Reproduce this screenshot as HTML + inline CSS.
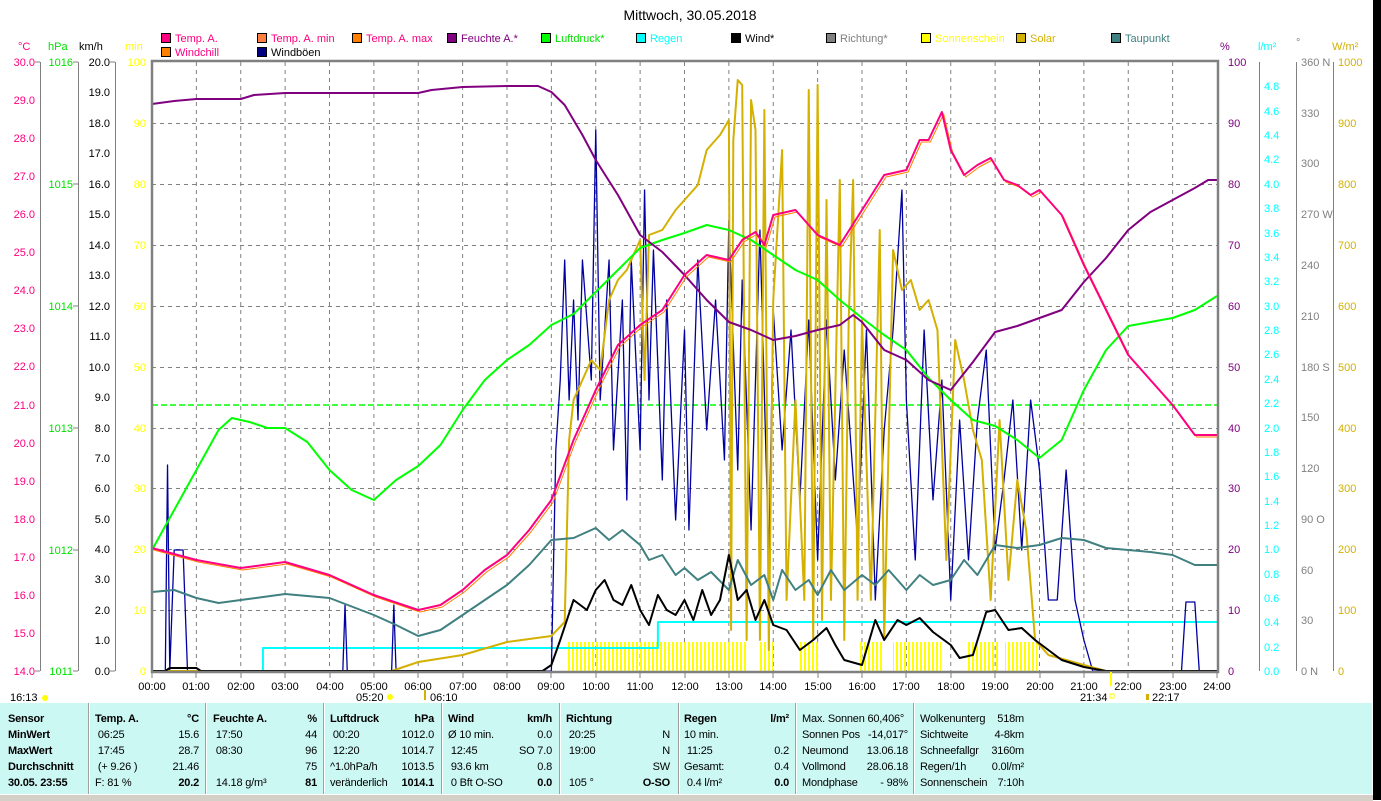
<!DOCTYPE html>
<html><head><meta charset="utf-8">
<style>
html,body{margin:0;padding:0;background:#fff;width:1381px;height:800px;overflow:hidden;font-family:"Liberation Sans",sans-serif;}
svg text{font-family:"Liberation Sans",sans-serif;font-size:11px;}
#tbl{position:absolute;left:0;top:703px;width:1372px;height:91px;background:#ccf8f4;}
#strip{position:absolute;left:1373px;top:0;width:8px;height:800px;background:#000;}
#bot{position:absolute;left:0;top:794px;width:1373px;height:6px;background:#d4d0c8;border-top:1px solid #fff;}
.c{position:absolute;top:8px;font-size:11px;letter-spacing:-0.2px;line-height:16px;color:#000;}
.c div{height:16px;position:relative;white-space:nowrap;}
.r{position:absolute;right:0;top:0;}
.b{font-weight:bold;}
.sep{position:absolute;top:0;width:1px;height:91px;background:#a0a0a0;border-right:1px solid #fff;}
</style></head><body>
<svg width="1381" height="703" style="position:absolute;left:0;top:0">
<defs>
<pattern id="sun" patternUnits="userSpaceOnUse" width="4" height="10"><rect x="0" y="0" width="2" height="10" fill="#ffff00"/></pattern>
</defs>
<text x="690" y="20" text-anchor="middle" style="font-size:14px">Mittwoch, 30.05.2018</text>
<g stroke="#000" stroke-width="1">
<rect x="161.5" y="33.5" width="9" height="9" fill="#ff0080"/>
<rect x="257.5" y="33.5" width="9" height="9" fill="#ff8040"/>
<rect x="352.5" y="33.5" width="9" height="9" fill="#ff8000"/>
<rect x="447.5" y="33.5" width="9" height="9" fill="#800080"/>
<rect x="541.5" y="33.5" width="9" height="9" fill="#00ff00"/>
<rect x="636.5" y="33.5" width="9" height="9" fill="#00ffff"/>
<rect x="731.5" y="33.5" width="9" height="9" fill="#000"/>
<rect x="826.5" y="33.5" width="9" height="9" fill="#808080"/>
<rect x="921.5" y="33.5" width="9" height="9" fill="#ffff00"/>
<rect x="1016.5" y="33.5" width="9" height="9" fill="#d4b000"/>
<rect x="1111.5" y="33.5" width="9" height="9" fill="#408080"/>
<rect x="161.5" y="47.5" width="9" height="9" fill="#ff8000"/>
<rect x="257.5" y="47.5" width="9" height="9" fill="#000080"/>
</g>
<g>
<text x="175" y="42" fill="#ff0080">Temp. A.</text>
<text x="271" y="42" fill="#ff0080">Temp. A. min</text>
<text x="366" y="42" fill="#ff0080">Temp. A. max</text>
<text x="461" y="42" fill="#800080">Feuchte A.*</text>
<text x="555" y="42" fill="#00e000">Luftdruck*</text>
<text x="650" y="42" fill="#00ffff">Regen</text>
<text x="745" y="42" fill="#000">Wind*</text>
<text x="840" y="42" fill="#808080">Richtung*</text>
<text x="935" y="42" fill="#ffff00">Sonnenschein</text>
<text x="1030" y="42" fill="#d4b000">Solar</text>
<text x="1125" y="42" fill="#408080">Taupunkt</text>
<text x="175" y="56" fill="#ff0080">Windchill</text>
<text x="271" y="56" fill="#000">Windböen</text>
</g>
<text x="18" y="50" fill="#ff0080">°C</text>
<text x="48" y="50" fill="#00e000">hPa</text>
<text x="79" y="50" fill="#000">km/h</text>
<text x="125" y="50" fill="#ffff00">min</text>
<text x="1220" y="50" fill="#800080">%</text>
<text x="1258" y="50" fill="#00ffff">l/m²</text>
<text x="1296" y="46" fill="#808080">°</text>
<text x="1332" y="50" fill="#d4b000">W/m²</text>
<g stroke="#808080" stroke-width="1">
<line x1="40.5" y1="62" x2="40.5" y2="671"/>
<line x1="78.5" y1="62" x2="78.5" y2="671"/>
<line x1="115.5" y1="62" x2="115.5" y2="671"/>
<line x1="1259.5" y1="62" x2="1259.5" y2="671"/>
<line x1="1296.5" y1="62" x2="1296.5" y2="671"/>
<line x1="1333.5" y1="62" x2="1333.5" y2="671"/>
<line x1="35" y1="62" x2="40" y2="62"/><line x1="35" y1="671" x2="40" y2="671"/>
<line x1="73" y1="62" x2="78" y2="62"/><line x1="73" y1="184" x2="78" y2="184"/><line x1="73" y1="306" x2="78" y2="306"/><line x1="73" y1="428" x2="78" y2="428"/><line x1="73" y1="550" x2="78" y2="550"/><line x1="73" y1="671" x2="78" y2="671"/>
<line x1="110" y1="62" x2="115" y2="62"/><line x1="110" y1="671" x2="115" y2="671"/>
</g>
<g fill="#ff0080" text-anchor="end">
<text x="35" y="66">30.0</text><text x="35" y="104">29.0</text><text x="35" y="142">28.0</text><text x="35" y="180">27.0</text><text x="35" y="218">26.0</text><text x="35" y="256">25.0</text><text x="35" y="294">24.0</text><text x="35" y="332">23.0</text><text x="35" y="370">22.0</text><text x="35" y="409">21.0</text><text x="35" y="447">20.0</text><text x="35" y="485">19.0</text><text x="35" y="523">18.0</text><text x="35" y="561">17.0</text><text x="35" y="599">16.0</text><text x="35" y="637">15.0</text><text x="35" y="675">14.0</text>
</g>
<g fill="#00e000" text-anchor="end">
<text x="73" y="66">1016</text><text x="73" y="188">1015</text><text x="73" y="310">1014</text><text x="73" y="432">1013</text><text x="73" y="554">1012</text><text x="73" y="675">1011</text>
</g>
<g fill="#000" text-anchor="end">
<text x="110" y="66">20.0</text><text x="110" y="96">19.0</text><text x="110" y="127">18.0</text><text x="110" y="157">17.0</text><text x="110" y="188">16.0</text><text x="110" y="218">15.0</text><text x="110" y="249">14.0</text><text x="110" y="279">13.0</text><text x="110" y="310">12.0</text><text x="110" y="340">11.0</text><text x="110" y="371">10.0</text><text x="110" y="401">9.0</text><text x="110" y="432">8.0</text><text x="110" y="462">7.0</text><text x="110" y="492">6.0</text><text x="110" y="523">5.0</text><text x="110" y="553">4.0</text><text x="110" y="583">3.0</text><text x="110" y="614">2.0</text><text x="110" y="644">1.0</text><text x="110" y="675">0.0</text>
</g>
<g fill="#ffff00" text-anchor="end">
<text x="146" y="66">100</text><text x="146" y="127">90</text><text x="146" y="188">80</text><text x="146" y="249">70</text><text x="146" y="310">60</text><text x="146" y="371">50</text><text x="146" y="432">40</text><text x="146" y="492">30</text><text x="146" y="553">20</text><text x="146" y="614">10</text><text x="146" y="675">0</text>
</g>
<g fill="#800080">
<text x="1228" y="66">100</text><text x="1228" y="127">90</text><text x="1228" y="188">80</text><text x="1228" y="249">70</text><text x="1228" y="310">60</text><text x="1228" y="371">50</text><text x="1228" y="432">40</text><text x="1228" y="492">30</text><text x="1228" y="553">20</text><text x="1228" y="614">10</text><text x="1228" y="675">0</text>
</g>
<g fill="#00ffff">
<text x="1264" y="90">4.8</text><text x="1264" y="115">4.6</text><text x="1264" y="139">4.4</text><text x="1264" y="163">4.2</text><text x="1264" y="188">4.0</text><text x="1264" y="212">3.8</text><text x="1264" y="237">3.6</text><text x="1264" y="261">3.4</text><text x="1264" y="285">3.2</text><text x="1264" y="310">3.0</text><text x="1264" y="334">2.8</text><text x="1264" y="358">2.6</text><text x="1264" y="383">2.4</text><text x="1264" y="407">2.2</text><text x="1264" y="432">2.0</text><text x="1264" y="456">1.8</text><text x="1264" y="480">1.6</text><text x="1264" y="505">1.4</text><text x="1264" y="529">1.2</text><text x="1264" y="553">1.0</text><text x="1264" y="578">0.8</text><text x="1264" y="602">0.6</text><text x="1264" y="626">0.4</text><text x="1264" y="651">0.2</text><text x="1264" y="675">0.0</text>
</g>
<g fill="#808080">
<text x="1301" y="66">360 N</text><text x="1301" y="117">330</text><text x="1301" y="167">300</text><text x="1301" y="218">270 W</text><text x="1301" y="269">240</text><text x="1301" y="320">210</text><text x="1301" y="371">180 S</text><text x="1301" y="421">150</text><text x="1301" y="472">120</text><text x="1301" y="523">90 O</text><text x="1301" y="574">60</text><text x="1301" y="624">30</text><text x="1301" y="675">0 N</text>
</g>
<g fill="#d4b000">
<text x="1338" y="66">1000</text><text x="1338" y="127">900</text><text x="1338" y="188">800</text><text x="1338" y="249">700</text><text x="1338" y="310">600</text><text x="1338" y="371">500</text><text x="1338" y="432">400</text><text x="1338" y="492">300</text><text x="1338" y="553">200</text><text x="1338" y="614">100</text><text x="1338" y="675">0</text>
</g>
<g stroke="#808080" stroke-width="1" stroke-dasharray="4,4">
<line x1="152" y1="123.5" x2="1217" y2="123.5"/><line x1="152" y1="184.5" x2="1217" y2="184.5"/><line x1="152" y1="245.5" x2="1217" y2="245.5"/><line x1="152" y1="306.5" x2="1217" y2="306.5"/><line x1="152" y1="367.5" x2="1217" y2="367.5"/><line x1="152" y1="428.5" x2="1217" y2="428.5"/><line x1="152" y1="488.5" x2="1217" y2="488.5"/><line x1="152" y1="549.5" x2="1217" y2="549.5"/><line x1="152" y1="610.5" x2="1217" y2="610.5"/>
</g>
<g transform="translate(152,0) scale(44.375,1)" fill="none">
<g stroke="#808080" stroke-dasharray="4,4">
<line x1="1" y1="62" x2="1" y2="671" vector-effect="non-scaling-stroke"/><line x1="2" y1="62" x2="2" y2="671" vector-effect="non-scaling-stroke"/><line x1="3" y1="62" x2="3" y2="671" vector-effect="non-scaling-stroke"/><line x1="4" y1="62" x2="4" y2="671" vector-effect="non-scaling-stroke"/><line x1="5" y1="62" x2="5" y2="671" vector-effect="non-scaling-stroke"/><line x1="6" y1="62" x2="6" y2="671" vector-effect="non-scaling-stroke"/><line x1="7" y1="62" x2="7" y2="671" vector-effect="non-scaling-stroke"/><line x1="8" y1="62" x2="8" y2="671" vector-effect="non-scaling-stroke"/><line x1="9" y1="62" x2="9" y2="671" vector-effect="non-scaling-stroke"/><line x1="10" y1="62" x2="10" y2="671" vector-effect="non-scaling-stroke"/><line x1="11" y1="62" x2="11" y2="671" vector-effect="non-scaling-stroke"/><line x1="12" y1="62" x2="12" y2="671" vector-effect="non-scaling-stroke"/><line x1="13" y1="62" x2="13" y2="671" vector-effect="non-scaling-stroke"/><line x1="14" y1="62" x2="14" y2="671" vector-effect="non-scaling-stroke"/><line x1="15" y1="62" x2="15" y2="671" vector-effect="non-scaling-stroke"/><line x1="16" y1="62" x2="16" y2="671" vector-effect="non-scaling-stroke"/><line x1="17" y1="62" x2="17" y2="671" vector-effect="non-scaling-stroke"/><line x1="18" y1="62" x2="18" y2="671" vector-effect="non-scaling-stroke"/><line x1="19" y1="62" x2="19" y2="671" vector-effect="non-scaling-stroke"/><line x1="20" y1="62" x2="20" y2="671" vector-effect="non-scaling-stroke"/><line x1="21" y1="62" x2="21" y2="671" vector-effect="non-scaling-stroke"/><line x1="22" y1="62" x2="22" y2="671" vector-effect="non-scaling-stroke"/><line x1="23" y1="62" x2="23" y2="671" vector-effect="non-scaling-stroke"/>
</g>
</g>
<g fill="url(#sun)">
<rect x="568" y="642" width="94" height="29"/><rect x="662" y="642" width="84" height="29"/><rect x="758" y="642" width="15" height="29"/><rect x="800" y="642" width="18" height="29"/><rect x="860" y="642" width="22" height="29"/><rect x="893" y="642" width="48" height="29"/><rect x="966" y="642" width="32" height="29"/><rect x="1005" y="642" width="32" height="29"/>
</g>
<line x1="152" y1="405" x2="1217" y2="405" stroke="#00ff00" stroke-width="1.5" stroke-dasharray="6,3"/>
<g transform="translate(152,0) scale(44.375,1)" fill="none" stroke-linejoin="round">
<polyline vector-effect="non-scaling-stroke" stroke="#00ffff" stroke-width="2" points="0,671 2.5,671 2.5,648 11.4,648 11.4,622 24,622"/>
<polyline vector-effect="non-scaling-stroke" stroke="#0000a0" stroke-width="1.3" points="0,671 0.3,671 0.35,465 0.4,671 0.5,550 0.7,550 0.8,671 4.3,671 4.35,605 4.4,671 5.4,671 5.45,605 5.5,671 9,671 9.1,450 9.2,380 9.3,260 9.4,400 9.5,300 9.6,420 9.7,260 9.9,380 10,130 10.1,400 10.3,260 10.4,450 10.6,300 10.7,500 10.8,260 11,450 11.1,190 11.2,400 11.3,250 11.5,480 11.6,300 11.8,520 12,330 12.1,530 12.3,260 12.5,430 12.7,300 12.9,460 13,220 13.2,470 13.3,280 13.5,530 13.7,230 13.9,560 14,310 14.2,450 14.4,330 14.6,500 14.8,320 15,560 15.2,320 15.4,480 15.6,350 15.9,540 16.1,330 16.3,600 16.5,430 16.7,330 16.9,190 17,400 17.2,560 17.4,330 17.6,500 17.8,380 18,600 18.2,420 18.4,560 18.6,420 18.8,350 19,550 19.2,480 19.4,400 19.6,550 19.8,400 20,470 20.2,600 20.4,600 20.6,470 20.8,600 21,640 21.2,671 23.2,671 23.3,602 23.5,602 23.6,671 24,671"/>
<polyline vector-effect="non-scaling-stroke" stroke="#d4b000" stroke-width="2" points="0,671 5.4,671 6,662 7,655 8,642 9,636 9.3,622 9.4,440 9.5,400 9.7,380 9.9,360 10.1,370 10.3,300 10.5,280 10.7,270 11,240 11.1,380 11.2,235 11.5,230 11.8,210 12,200 12.3,185 12.5,150 12.8,135 13,120 13.05,630 13.1,140 13.2,80 13.3,85 13.4,640 13.5,100 13.6,130 13.7,640 13.8,110 13.9,650 14,300 14.2,150 14.3,600 14.5,400 14.7,600 14.8,90 14.9,640 15,85 15.1,620 15.2,200 15.3,600 15.5,180 15.6,640 15.7,320 15.8,180 15.9,600 16,320 16.2,600 16.4,230 16.5,640 16.7,250 16.9,290 17.1,280 17.3,310 17.5,300 17.7,330 17.9,560 18.1,340 18.3,380 18.5,430 18.7,460 18.9,600 19.1,420 19.3,580 19.5,480 19.7,530 19.9,640 20.2,655 21,665 21.5,671 24,671"/>
<polyline vector-effect="non-scaling-stroke" stroke="#408080" stroke-width="2" points="0,592 0.5,590 1,598 1.5,603 2,600 3,594 4,598 5,615 5.5,625 6,636 6.5,630 7,615 7.5,600 8,585 8.5,565 9,540 9.5,538 10,528 10.3,540 10.6,530 11,545 11.2,560 11.5,555 11.8,575 12,568 12.3,580 12.6,572 13,590 13.2,560 13.5,585 13.8,575 14,600 14.2,570 14.5,590 14.8,580 15,595 15.3,570 15.6,590 16,575 16.3,585 16.6,570 17,590 17.3,575 17.6,585 18,580 18.3,560 18.6,575 19,545 19.5,548 20,545 20.5,538 21,540 21.5,548 22,550 22.5,552 23,555 23.5,565 24,565"/>
<polyline vector-effect="non-scaling-stroke" stroke="#000" stroke-width="2" points="0,671 0.3,671 0.4,668 1,668 1.1,671 8.8,671 9,665 9.2,640 9.5,600 9.8,610 10,590 10.2,580 10.4,600 10.6,605 10.8,585 11,610 11.2,625 11.4,595 11.6,610 11.8,615 12,600 12.2,620 12.4,590 12.6,615 12.8,600 13,555 13.2,600 13.4,590 13.6,620 13.8,600 14,625 14.3,630 14.6,650 14.9,640 15.2,628 15.4,645 15.6,660 16,665 16.3,620 16.5,640 16.8,620 17,625 17.3,618 17.6,632 18,645 18.2,658 18.5,655 18.8,612 19,610 19.3,630 19.6,628 19.9,640 20.2,650 20.5,660 21,667 21.5,671 24,671"/>
<polyline vector-effect="non-scaling-stroke" stroke="#00ff00" stroke-width="2" points="0,550 0.5,510 1,470 1.5,430 1.8,418 2.2,422 2.6,428 3,428 3.5,442 4,470 4.5,490 5,500 5.5,480 6,466 6.5,445 7,410 7.5,380 8,360 8.5,345 9,325 9.5,314 10,292 10.5,270 11,248 11.5,240 12,233 12.5,225 13,230 13.5,240 14,255 14.5,270 15,280 15.5,300 16,318 16.5,335 17,350 17.5,378 18,400 18.5,420 19,426 19.5,440 20,458 20.5,440 21,390 21.5,350 22,326 22.5,322 23,318 23.5,310 24,296"/>
<polyline vector-effect="non-scaling-stroke" stroke="#800080" stroke-width="2" points="0,104 0.5,101 1,99 2,99 2.3,95 3,93 6,93 6.3,90 7,87 8,86 8.7,86 9,92 9.3,105 9.7,135 10,160 10.5,195 11,235 11.5,252 12,275 12.5,300 13,322 13.5,330 14,340 14.5,336 15,330 15.5,325 15.8,315 16,322 16.5,350 17,360 17.5,380 18,390 18.5,362 19,332 19.5,326 20,318 20.5,310 21,282 21.5,258 22,230 22.5,212 23,200 23.5,188 23.8,180 24,180"/>
<polyline vector-effect="non-scaling-stroke" stroke="#ff8000" stroke-width="1" transform="translate(0.04,2)" points="0,548 1,560 2,568 3,562 4,575 5,595 6,610 6.5,605 7,590 7.5,570 8,555 8.5,530 9,500 9.5,440 10,390 10.5,345 11,325 11.5,310 12,275 12.5,255 13,260 13.3,240 13.6,232 13.8,245 14,215 14.5,210 15,235 15.5,245 16,210 16.5,175 17,170 17.3,140 17.5,140 17.8,112 18,150 18.3,175 18.6,165 18.9,158 19.2,180 19.5,185 19.8,195 20,190 20.5,215 21,265 21.5,310 22,355 22.5,380 23,405 23.5,435 24,435"/>
<polyline vector-effect="non-scaling-stroke" stroke="#ff0080" stroke-width="2" points="0,548 1,560 2,568 3,562 4,575 5,595 6,610 6.5,605 7,590 7.5,570 8,555 8.5,530 9,500 9.5,440 10,390 10.5,345 11,325 11.5,310 12,275 12.5,255 13,260 13.3,240 13.6,232 13.8,245 14,215 14.5,210 15,235 15.5,245 16,210 16.5,175 17,170 17.3,140 17.5,140 17.8,112 18,150 18.3,175 18.6,165 18.9,158 19.2,180 19.5,185 19.8,195 20,190 20.5,215 21,265 21.5,310 22,355 22.5,380 23,405 23.5,435 24,435"/>
</g>
<rect x="152" y="61" width="1066" height="611" fill="none" stroke="#808080" stroke-width="2.5"/>
<g stroke="#808080"><line x1="152" y1="672" x2="152" y2="678"/><line x1="196" y1="672" x2="196" y2="678"/><line x1="241" y1="672" x2="241" y2="678"/><line x1="285" y1="672" x2="285" y2="678"/><line x1="330" y1="672" x2="330" y2="678"/><line x1="374" y1="672" x2="374" y2="678"/><line x1="418" y1="672" x2="418" y2="678"/><line x1="463" y1="672" x2="463" y2="678"/><line x1="507" y1="672" x2="507" y2="678"/><line x1="551" y1="672" x2="551" y2="678"/><line x1="596" y1="672" x2="596" y2="678"/><line x1="640" y1="672" x2="640" y2="678"/><line x1="685" y1="672" x2="685" y2="678"/><line x1="729" y1="672" x2="729" y2="678"/><line x1="773" y1="672" x2="773" y2="678"/><line x1="818" y1="672" x2="818" y2="678"/><line x1="862" y1="672" x2="862" y2="678"/><line x1="906" y1="672" x2="906" y2="678"/><line x1="951" y1="672" x2="951" y2="678"/><line x1="995" y1="672" x2="995" y2="678"/><line x1="1040" y1="672" x2="1040" y2="678"/><line x1="1084" y1="672" x2="1084" y2="678"/><line x1="1128" y1="672" x2="1128" y2="678"/><line x1="1173" y1="672" x2="1173" y2="678"/><line x1="1217" y1="672" x2="1217" y2="678"/></g>
<g text-anchor="middle" fill="#000">
<text x="152" y="690">00:00</text><text x="196" y="690">01:00</text><text x="241" y="690">02:00</text><text x="285" y="690">03:00</text><text x="330" y="690">04:00</text><text x="374" y="690">05:00</text><text x="418" y="690">06:00</text><text x="463" y="690">07:00</text><text x="507" y="690">08:00</text><text x="551" y="690">09:00</text><text x="596" y="690">10:00</text><text x="640" y="690">11:00</text><text x="685" y="690">12:00</text><text x="729" y="690">13:00</text><text x="773" y="690">14:00</text><text x="818" y="690">15:00</text><text x="862" y="690">16:00</text><text x="906" y="690">17:00</text><text x="951" y="690">18:00</text><text x="995" y="690">19:00</text><text x="1040" y="690">20:00</text><text x="1084" y="690">21:00</text><text x="1128" y="690">22:00</text><text x="1173" y="690">23:00</text><text x="1217" y="690">24:00</text>
</g>
<text x="10" y="701">16:13</text><circle cx="45" cy="698" r="3" fill="#ffff00"/>
<text x="356" y="701">05:20</text><circle cx="390" cy="697" r="3" fill="#ffff00"/>
<text x="430" y="701">06:10</text><rect x="424" y="690" width="2" height="10" fill="#d4b000"/>
<text x="1080" y="701">21:34</text><rect x="1110" y="694" width="4" height="4" fill="none" stroke="#ffff00"/>
<text x="1152" y="701">22:17</text><rect x="1146" y="694" width="3" height="6" fill="#d4b000"/>
<rect x="1110" y="672" width="2" height="14" fill="#ffff00"/>
</svg>
<div id="tbl">
<div class="sep" style="left:88px"></div><div class="sep" style="left:205px"></div><div class="sep" style="left:323px"></div><div class="sep" style="left:441px"></div><div class="sep" style="left:559px"></div><div class="sep" style="left:678px"></div><div class="sep" style="left:795px"></div><div class="sep" style="left:913px"></div>
<div class="c b" style="left:8px;width:76px"><div>Sensor</div><div>MinWert</div><div>MaxWert</div><div>Durchschnitt</div><div>30.05. 23:55</div></div>
<div class="c" style="left:95px;width:104px"><div class="b">Temp. A.<span class="r">°C</span></div><div>&nbsp;06:25<span class="r">15.6</span></div><div>&nbsp;17:45<span class="r">28.7</span></div><div>&nbsp;(+ 9.26 )<span class="r">21.46</span></div><div>F: 81 %<span class="r b">20.2</span></div></div>
<div class="c" style="left:213px;width:104px"><div class="b">Feuchte A.<span class="r">%</span></div><div>&nbsp;17:50<span class="r">44</span></div><div>&nbsp;08:30<span class="r">96</span></div><div><span class="r">75</span></div><div>&nbsp;14.18 g/m³<span class="r b">81</span></div></div>
<div class="c" style="left:330px;width:104px"><div class="b">Luftdruck<span class="r">hPa</span></div><div>&nbsp;00:20<span class="r">1012.0</span></div><div>&nbsp;12:20<span class="r">1014.7</span></div><div>^1.0hPa/h<span class="r">1013.5</span></div><div>veränderlich<span class="r b">1014.1</span></div></div>
<div class="c" style="left:448px;width:104px"><div class="b">Wind<span class="r">km/h</span></div><div>Ø 10 min.<span class="r">0.0</span></div><div>&nbsp;12:45<span class="r">SO 7.0</span></div><div>&nbsp;93.6 km<span class="r">0.8</span></div><div>&nbsp;0 Bft O-SO<span class="r b">0.0</span></div></div>
<div class="c" style="left:566px;width:104px"><div class="b">Richtung</div><div>&nbsp;20:25<span class="r">N</span></div><div>&nbsp;19:00<span class="r">N</span></div><div><span class="r">SW</span></div><div>&nbsp;105 °<span class="r b">O-SO</span></div></div>
<div class="c" style="left:684px;width:105px"><div class="b">Regen<span class="r">l/m²</span></div><div>10 min.</div><div>&nbsp;11:25<span class="r">0.2</span></div><div>Gesamt:<span class="r">0.4</span></div><div>&nbsp;0.4 l/m²<span class="r b">0.0</span></div></div>
<div class="c" style="left:802px;width:106px"><div>Max. Sonnen 60,406°</div><div>Sonnen Pos<span class="r">-14,017°</span></div><div>Neumond<span class="r">13.06.18</span></div><div>Vollmond<span class="r">28.06.18</span></div><div>Mondphase<span class="r">- 98%</span></div></div>
<div class="c" style="left:920px;width:104px"><div>Wolkenunterg<span class="r">518m</span></div><div>Sichtweite<span class="r">4-8km</span></div><div>Schneefallgr<span class="r">3160m</span></div><div>Regen/1h<span class="r">0.0l/m²</span></div><div>Sonnenschein<span class="r">7:10h</span></div></div>
</div>
<div id="bot"></div>
<div id="strip"></div>
</body></html>
